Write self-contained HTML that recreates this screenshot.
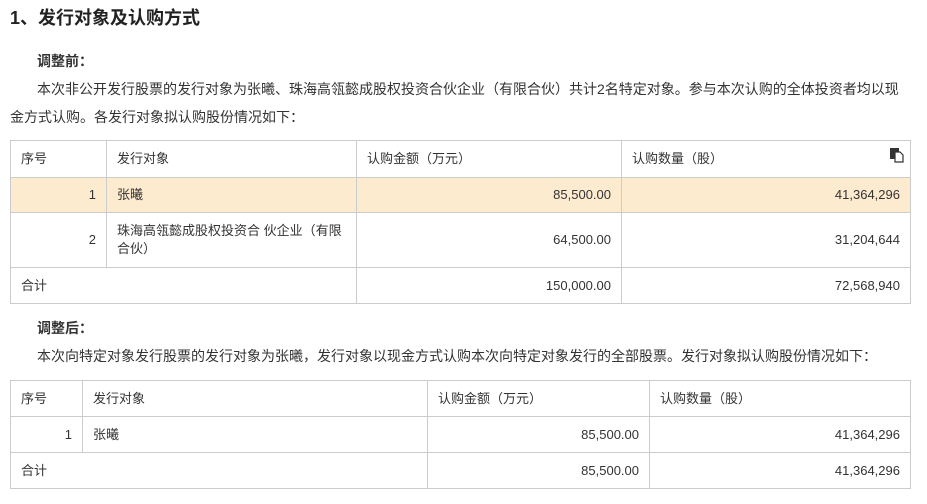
<!DOCTYPE html>
<html><head><meta charset="utf-8"><style>
body{margin:0;width:927px;height:504px;background:#fff;font-family:"Liberation Sans","Noto Sans CJK SC",sans-serif;color:#333;font-size:13px;position:relative;overflow:hidden}
.a{position:absolute;white-space:nowrap}
.p{font-size:14px}
table{position:absolute;border-collapse:collapse;left:10px;width:900px;table-layout:fixed}
td{border:1px solid #ccc;padding:0 10px;font-size:13px;color:#333;line-height:18px}
.r{text-align:right}
</style></head><body>
<div class="a" style="left:10px;top:4px;font-size:18px;font-weight:bold;color:#222">1、发行对象及认购方式</div>
<div class="a p" style="left:37px;top:51px;font-weight:bold">调整前：</div>
<div class="a p" style="left:37px;top:79px">本次非公开发行股票的发行对象为张曦、珠海高瓴懿成股权投资合伙企业（有限合伙）共计2名特定对象。参与本次认购的全体投资者均以现</div>
<div class="a p" style="left:10px;top:107px">金方式认购。各发行对象拟认购股份情况如下：</div>
<table style="top:140px">
<colgroup><col style="width:96px"><col style="width:250px"><col style="width:265px"><col style="width:289px"></colgroup>
<tr style="height:37px"><td>序号</td><td>发行对象</td><td>认购金额（万元）</td><td style="position:relative">认购数量（股）<svg style="position:absolute;right:5px;top:6px" width="16" height="16" viewBox="0 0 16 16"><rect x="1" y="1" width="9" height="11" fill="#333"/><path d="M6 5h5l3 3v7H6z" fill="#fff" stroke="#333" stroke-width="1.2"/></svg></td></tr>
<tr style="height:35px;background:#fdebd0"><td class="r">1</td><td>张曦</td><td class="r">85,500.00</td><td class="r">41,364,296</td></tr>
<tr style="height:55px"><td class="r">2</td><td style="white-space:normal">珠海高瓴懿成股权投资合 伙企业（有限合伙）</td><td class="r">64,500.00</td><td class="r">31,204,644</td></tr>
<tr style="height:36px"><td colspan="2">合计</td><td class="r">150,000.00</td><td class="r">72,568,940</td></tr>
</table>
<div class="a p" style="left:37px;top:318px;font-weight:bold">调整后：</div>
<div class="a p" style="left:37px;top:346px">本次向特定对象发行股票的发行对象为张曦，发行对象以现金方式认购本次向特定对象发行的全部股票。发行对象拟认购股份情况如下：</div>
<table style="top:380px">
<colgroup><col style="width:72px"><col style="width:345px"><col style="width:222px"><col style="width:261px"></colgroup>
<tr style="height:36px"><td>序号</td><td>发行对象</td><td>认购金额（万元）</td><td>认购数量（股）</td></tr>
<tr style="height:36px"><td class="r">1</td><td>张曦</td><td class="r">85,500.00</td><td class="r">41,364,296</td></tr>
<tr style="height:36px"><td colspan="2">合计</td><td class="r">85,500.00</td><td class="r">41,364,296</td></tr>
</table>
</body></html>
